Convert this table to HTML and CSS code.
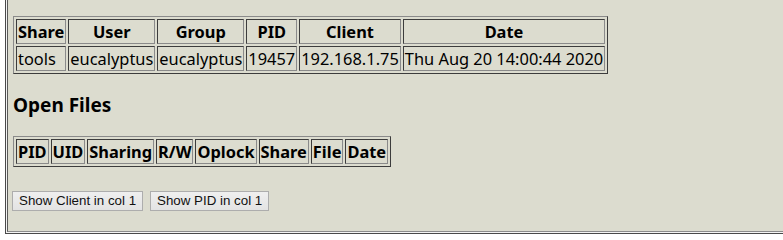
FILE: index.html
```html
<!DOCTYPE html>
<html>
<head>
<meta charset="utf-8">
<title>Status</title>
<link rel="stylesheet" href="styles.css">
</head>
<body>
<div class="frame">
  <div class="pane">
    <table class="grid">
      <tr><th>Share</th><th>User</th><th>Group</th><th>PID</th><th>Client</th><th>Date</th></tr>
      <tr><td>tools</td><td>eucalyptus</td><td>eucalyptus</td><td>19457</td><td>192.168.1.75</td><td>Thu Aug 20 14:00:44 2020</td></tr>
    </table>
    <h3 class="heading">Open Files</h3>
    <table class="grid">
      <tr><th>PID</th><th>UID</th><th>Sharing</th><th>R/W</th><th>Oplock</th><th>Share</th><th>File</th><th>Date</th></tr>
    </table>
    <div class="actions">
      <button class="btn" type="button">Show Client in col 1</button>
      <button class="btn" type="button">Show PID in col 1</button>
    </div>
  </div>
</div>
</body>
</html>
```
FILE: styles.css
```css
html, body {
  margin: 0;
  padding: 0;
  background: #ffffff;
}
body {
  font-family: "Noto Sans", "DejaVu Sans", sans-serif;
  font-size: 16px;
  color: #000;
}
.frame {
  margin-left: 5px;
  border-left: 1px solid #4a4a4a;
  border-bottom: 1px solid #4a4a4a;
  padding: 0 0 1px 1px;
  background: #f4f4f4;
}
.pane {
  border-left: 1px solid #5a5a5a;
  border-bottom: 1px solid #8c8c8c;
  background: #dcdccf;
  padding: 16px 0 20px 5px;
}
.grid {
  border-collapse: separate;
  border-spacing: 2px;
  border: 1px solid;
  border-color: #8a8a8a #3c3c3c #3c3c3c #8a8a8a;
  font-size: 16.4px;
  line-height: 21px;
}
.grid th, .grid td {
  border: 1px solid;
  border-color: #3c3c3c #8a8a8a #8a8a8a #3c3c3c;
  padding: 1px;
  white-space: nowrap;
}
.grid th {
  font-weight: bold;
  text-align: center;
}
.grid td {
  text-align: left;
}
.heading {
  font-size: 19px;
  line-height: 26px;
  font-weight: bold;
  margin: 18px 0;
}
.actions {
  display: flex;
  gap: 7px;
  margin: 24px 0 0 -1px;
}
.btn {
  font-family: "Liberation Sans", Arial, sans-serif;
  font-size: 13.333px;
  line-height: 16px;
  color: #111;
  padding: 1px 6px;
  margin: 0;
  border: 1px solid #adadad;
  border-radius: 0;
  background: linear-gradient(#efefef, #e3e3e3);
}
```
